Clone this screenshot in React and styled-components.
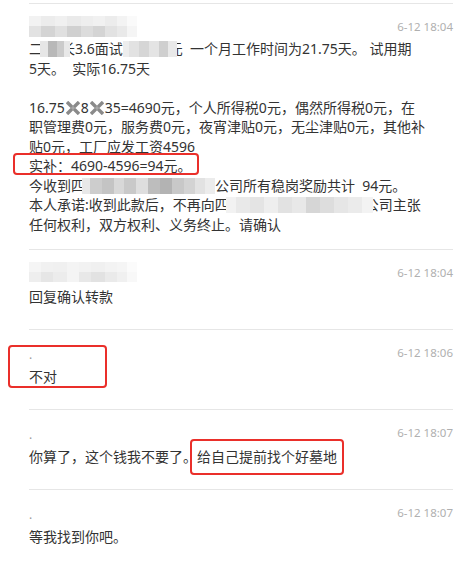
import React from 'react';
import styled, { createGlobalStyle } from 'styled-components';

const Global = createGlobalStyle`
  html, body { margin: 0; padding: 0; background: #ffffff; }
  body { font-family: "Noto Sans", "Noto Sans CJK SC", sans-serif; }
`;

const Page = styled.div`
  width: 470px;
  height: 568px;
  overflow: hidden;
  box-sizing: border-box;
  padding: 3px 17px 0 29px;
`;

const Message = styled.div`
  position: relative;
  box-sizing: border-box;
  min-height: 80px;
  border-top: 1px solid #e6e6e6;
  padding: 11px 0 ${p => p.$pb ?? 15}px;
`;

const Header = styled.div`
  display: flex;
  justify-content: space-between;
  align-items: center;
  height: 22px;
`;

const Time = styled.span`
  font-family: "Noto Sans", sans-serif;
  font-size: 11.5px;
  color: #b0b0b0;
`;

const NameDot = styled.span`
  font-size: 12px;
  line-height: 22px;
  color: #9a9a9a;
  padding-top: 6px;
`;

const Body = styled.div`
  margin-top: ${p => p.$gap}px;
  font-size: 14px;
  line-height: 19.5px;
  color: #333333;
  white-space: nowrap;
`;

const Line = styled.div`
  height: 19.5px;
`;

const MosaicBox = styled.span`
  display: inline-flex;
  flex-direction: column;
  vertical-align: top;
  margin-top: ${p => p.$top}px;
  height: ${p => p.$h}px;
`;

const MosaicRow = styled.span`
  display: flex;
  flex: 1;
`;

const Cell = styled.span`
  width: ${p => p.$w}px;
  background: ${p => p.$c};
`;

const Clip = styled.span`
  display: inline-block;
  vertical-align: top;
  overflow: hidden;
  width: ${p => p.$w}px;
  height: 19.5px;
  text-indent: ${p => p.$shift || 0}px;
`;

const Times = styled.svg`
  width: 14px;
  height: 14px;
  vertical-align: -2px;
  margin: 0 1px;
`;

const Boxed = styled.span`
  position: relative;
  display: inline-block;
  &::after {
    content: '';
    position: absolute;
    box-sizing: border-box;
    left: ${p => p.$l}px;
    top: ${p => p.$t}px;
    ${p => (p.$w ? `width: ${p.$w}px;` : `right: ${p.$r}px;`)}
    bottom: ${p => p.$b}px;
    border: 2px solid #ea2f2a;
    border-radius: 4px;
    pointer-events: none;
  }
`;

const Annotation = styled.div`
  position: absolute;
  box-sizing: border-box;
  left: ${p => p.$x}px;
  top: ${p => p.$y}px;
  width: ${p => p.$w}px;
  height: ${p => p.$h}px;
  border: 2px solid #ea2f2a;
  border-radius: 4px;
`;

function Mosaic({ rows, h = 16, top = 2 }) {
  return (
    <MosaicBox $h={h} $top={top}>
      {rows.map((row, i) => (
        <MosaicRow key={i}>
          {row.map(([w, c], j) => (
            <Cell key={j} $w={w} $c={c} />
          ))}
        </MosaicRow>
      ))}
    </MosaicBox>
  );
}

const X = () => (
  <Times viewBox="0 0 14 14">
    <path d="M2.2 2.2 L11.8 11.8 M11.8 2.2 L2.2 11.8" stroke="#8a8a8a" strokeWidth="3.4" strokeLinecap="square" />
    <path d="M7 4.6 L7 9.4 M4.6 7 L9.4 7" stroke="#ffffff" strokeWidth="0.6" opacity="0.5" />
  </Times>
);

const nameMosaic1 = [
  [[12, '#f2f2f2'], [14, '#ececec'], [12, '#f0f0f0'], [14, '#eaeaea'], [12, '#eeeeee'], [12, '#f1f1f1'], [12, '#ececec'], [10, '#f3f3f3'], [10, '#fafafa']],
  [[12, '#e2e2e2'], [14, '#d4d4d4'], [12, '#e0e0e0'], [14, '#d0d0d0'], [12, '#dcdcdc'], [12, '#d4d4d4'], [12, '#e2e2e2'], [10, '#e9e9e9'], [10, '#f5f5f5']],
];

const nameMosaic2 = [
  [[12, '#f5f5f5'], [12, '#f1f1f1'], [14, '#f0f0f0'], [12, '#f4f4f4'], [12, '#f2f2f2'], [14, '#f0f0f0'], [12, '#f3f3f3'], [10, '#f5f5f5'], [10, '#fbfbfb']],
  [[12, '#eeeeee'], [12, '#e6e6e6'], [14, '#ececec'], [12, '#f4f4f4'], [12, '#e8e8e8'], [14, '#e2e2e2'], [12, '#eaeaea'], [10, '#f0f0f0'], [10, '#f8f8f8']],
];

export default function App() {
  return (
    <>
      <Global />
      <Page>
        <Message $pb={15}>
          <Header>
            <Mosaic rows={nameMosaic1} h={21} top={0} />
            <Time>6-12 18:04</Time>
          </Header>
          <Body $gap={2}>
            <Line>
              <Clip $w={11}>二</Clip>
              <Mosaic rows={[[[8, '#e6e6e6'], [9, '#b8b8b8'], [7, '#cbcbcb'], [6, '#e8e8e8']]]} />
              <Clip $w={5} $shift={-9}>长</Clip>
              3.6面试
              <Mosaic rows={[[[6, '#ededed'], [10, '#e2e2e2'], [10, '#d6d6d6'], [10, '#e4e4e4'], [9, '#cfcfcf'], [9, '#e9e9e9']]]} />
              <Clip $w={6} $shift={-8}>元</Clip>
              {'\u00a0 一个月工作时间为21.75天。 试用期'}
            </Line>
            <Line>{'5天。\u00a0 实际16.75天'}</Line>
            <Line />
            <Line>
              16.75<X />8<X />35=4690元，个人所得税0元，偶然所得税0元，在
            </Line>
            <Line>职管理费0元，服务费0元，夜宵津贴0元，无尘津贴0元，其他补</Line>
            <Line>贴0元，工厂应发工资4596</Line>
            <Line>
              <Boxed $l={-16} $t={-3} $w={186} $b={1}>实补：4690-4596=94元。</Boxed>
            </Line>
            <Line>
              今收到
              <Clip $w={11}>四</Clip>
              <Mosaic rows={[[[8, '#e8e8e8'], [12, '#cdcdcd'], [12, '#c4c4c4'], [10, '#d8d8d8'], [12, '#c9c9c9'], [12, '#dedede'], [12, '#bdbdbd'], [12, '#b3b3b3'], [12, '#c8c8c8'], [11, '#d3d3d3'], [10, '#e2e2e2'], [10, '#ececec']]]} />
              {'公司所有稳岗奖励共计\u00a0 94元。'}
            </Line>
            <Line>
              本人承诺:收到此款后，不再向
              <Clip $w={11}>四</Clip>
              <Mosaic rows={[[[10, '#f2f2f2'], [14, '#e9e9e9'], [14, '#e4e4e4'], [14, '#eeeeee'], [14, '#e2e2e2'], [14, '#e8e8e8'], [14, '#d6d6d6'], [14, '#dddddd'], [14, '#e6e6e6'], [14, '#ebebeb'], [11, '#f3f3f3']]]} />
              <Clip $w={6} $shift={-8}>公</Clip>
              司主张
            </Line>
            <Line>任何权利，双方权利、义务终止。请确认</Line>
          </Body>
        </Message>

        <Message>
          <Header>
            <Mosaic rows={nameMosaic2} h={20} top={0} />
            <Time>6-12 18:04</Time>
          </Header>
          <Body $gap={4}>
            <Line>回复确认转款</Line>
          </Body>
        </Message>

        <Message>
          <Annotation $x={-21} $y={15} $w={99} $h={43} />
          <Header>
            <NameDot>.</NameDot>
            <Time>6-12 18:06</Time>
          </Header>
          <Body $gap={4}>
            <Line>不对</Line>
          </Body>
        </Message>

        <Message>
          <Header>
            <NameDot>.</NameDot>
            <Time>6-12 18:07</Time>
          </Header>
          <Body $gap={4}>
            <Line>
              你算了，这个钱我不要了。
              <Boxed $l={-7} $t={-8} $r={-7} $b={-8}>给自己提前找个好墓地</Boxed>
            </Line>
          </Body>
        </Message>

        <Message>
          <Header>
            <NameDot>.</NameDot>
            <Time>6-12 18:07</Time>
          </Header>
          <Body $gap={4}>
            <Line>等我找到你吧。</Line>
          </Body>
        </Message>
      </Page>
    </>
  );
}
